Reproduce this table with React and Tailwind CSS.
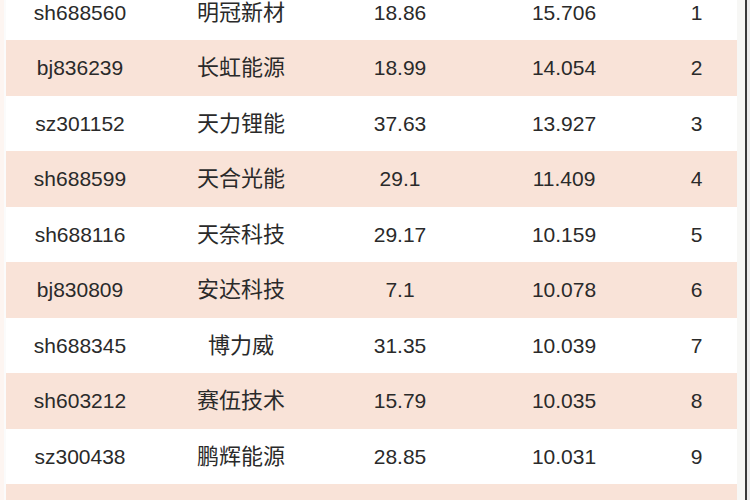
import React from 'react';

const rows = [
  ['sh688560', '明冠新材', '18.86', '15.706', '1'],
  ['bj836239', '长虹能源', '18.99', '14.054', '2'],
  ['sz301152', '天力锂能', '37.63', '13.927', '3'],
  ['sh688599', '天合光能', '29.1', '11.409', '4'],
  ['sh688116', '天奈科技', '29.17', '10.159', '5'],
  ['bj830809', '安达科技', '7.1', '10.078', '6'],
  ['sh688345', '博力威', '31.35', '10.039', '7'],
  ['sh603212', '赛伍技术', '15.79', '10.035', '8'],
  ['sz300438', '鹏辉能源', '28.85', '10.031', '9'],
];

const App = () => {
  return (
    <div
      className="w-[750px] h-[500px] overflow-hidden bg-white flex text-[#2a2a2a]"
      style={{ fontFamily: '"Liberation Sans", "Noto Sans CJK SC", sans-serif' }}
    >
      {/* left faint edge */}
      <div className="w-[6px] flex">
        <div className="w-[4px] bg-[#fdf5f1]" />
        <div className="w-[2px] bg-[#fbfbfb]" />
      </div>

      {/* table */}
      <div className="w-[731px] -mt-[15.5px]">
        {rows.map((r, i) => (
          <div
            key={i}
            className={`flex items-center h-[55.5px] text-[21px] ${i % 2 === 1 ? 'bg-[#f9e3d8]' : 'bg-white'}`}
          >
            <div className="w-[148px] text-center">{r[0]}</div>
            <div className="w-[174px] text-center text-[22px]">{r[1]}</div>
            <div className="w-[144px] text-center">{r[2]}</div>
            <div className="w-[184px] text-center">{r[3]}</div>
            <div className="w-[81px] text-center">{r[4]}</div>
          </div>
        ))}
        {/* next row, cut off at the bottom */}
        <div className="h-[55.5px] bg-[#f9e3d8]" />
      </div>

      {/* right border */}
      <div className="w-[8px] bg-[#f7f7f5]" />
      <div className="w-[2px] bg-[#3a3a3a]" />
      <div className="w-[3px] bg-[#ececec]" />
    </div>
  );
};

export default App;
